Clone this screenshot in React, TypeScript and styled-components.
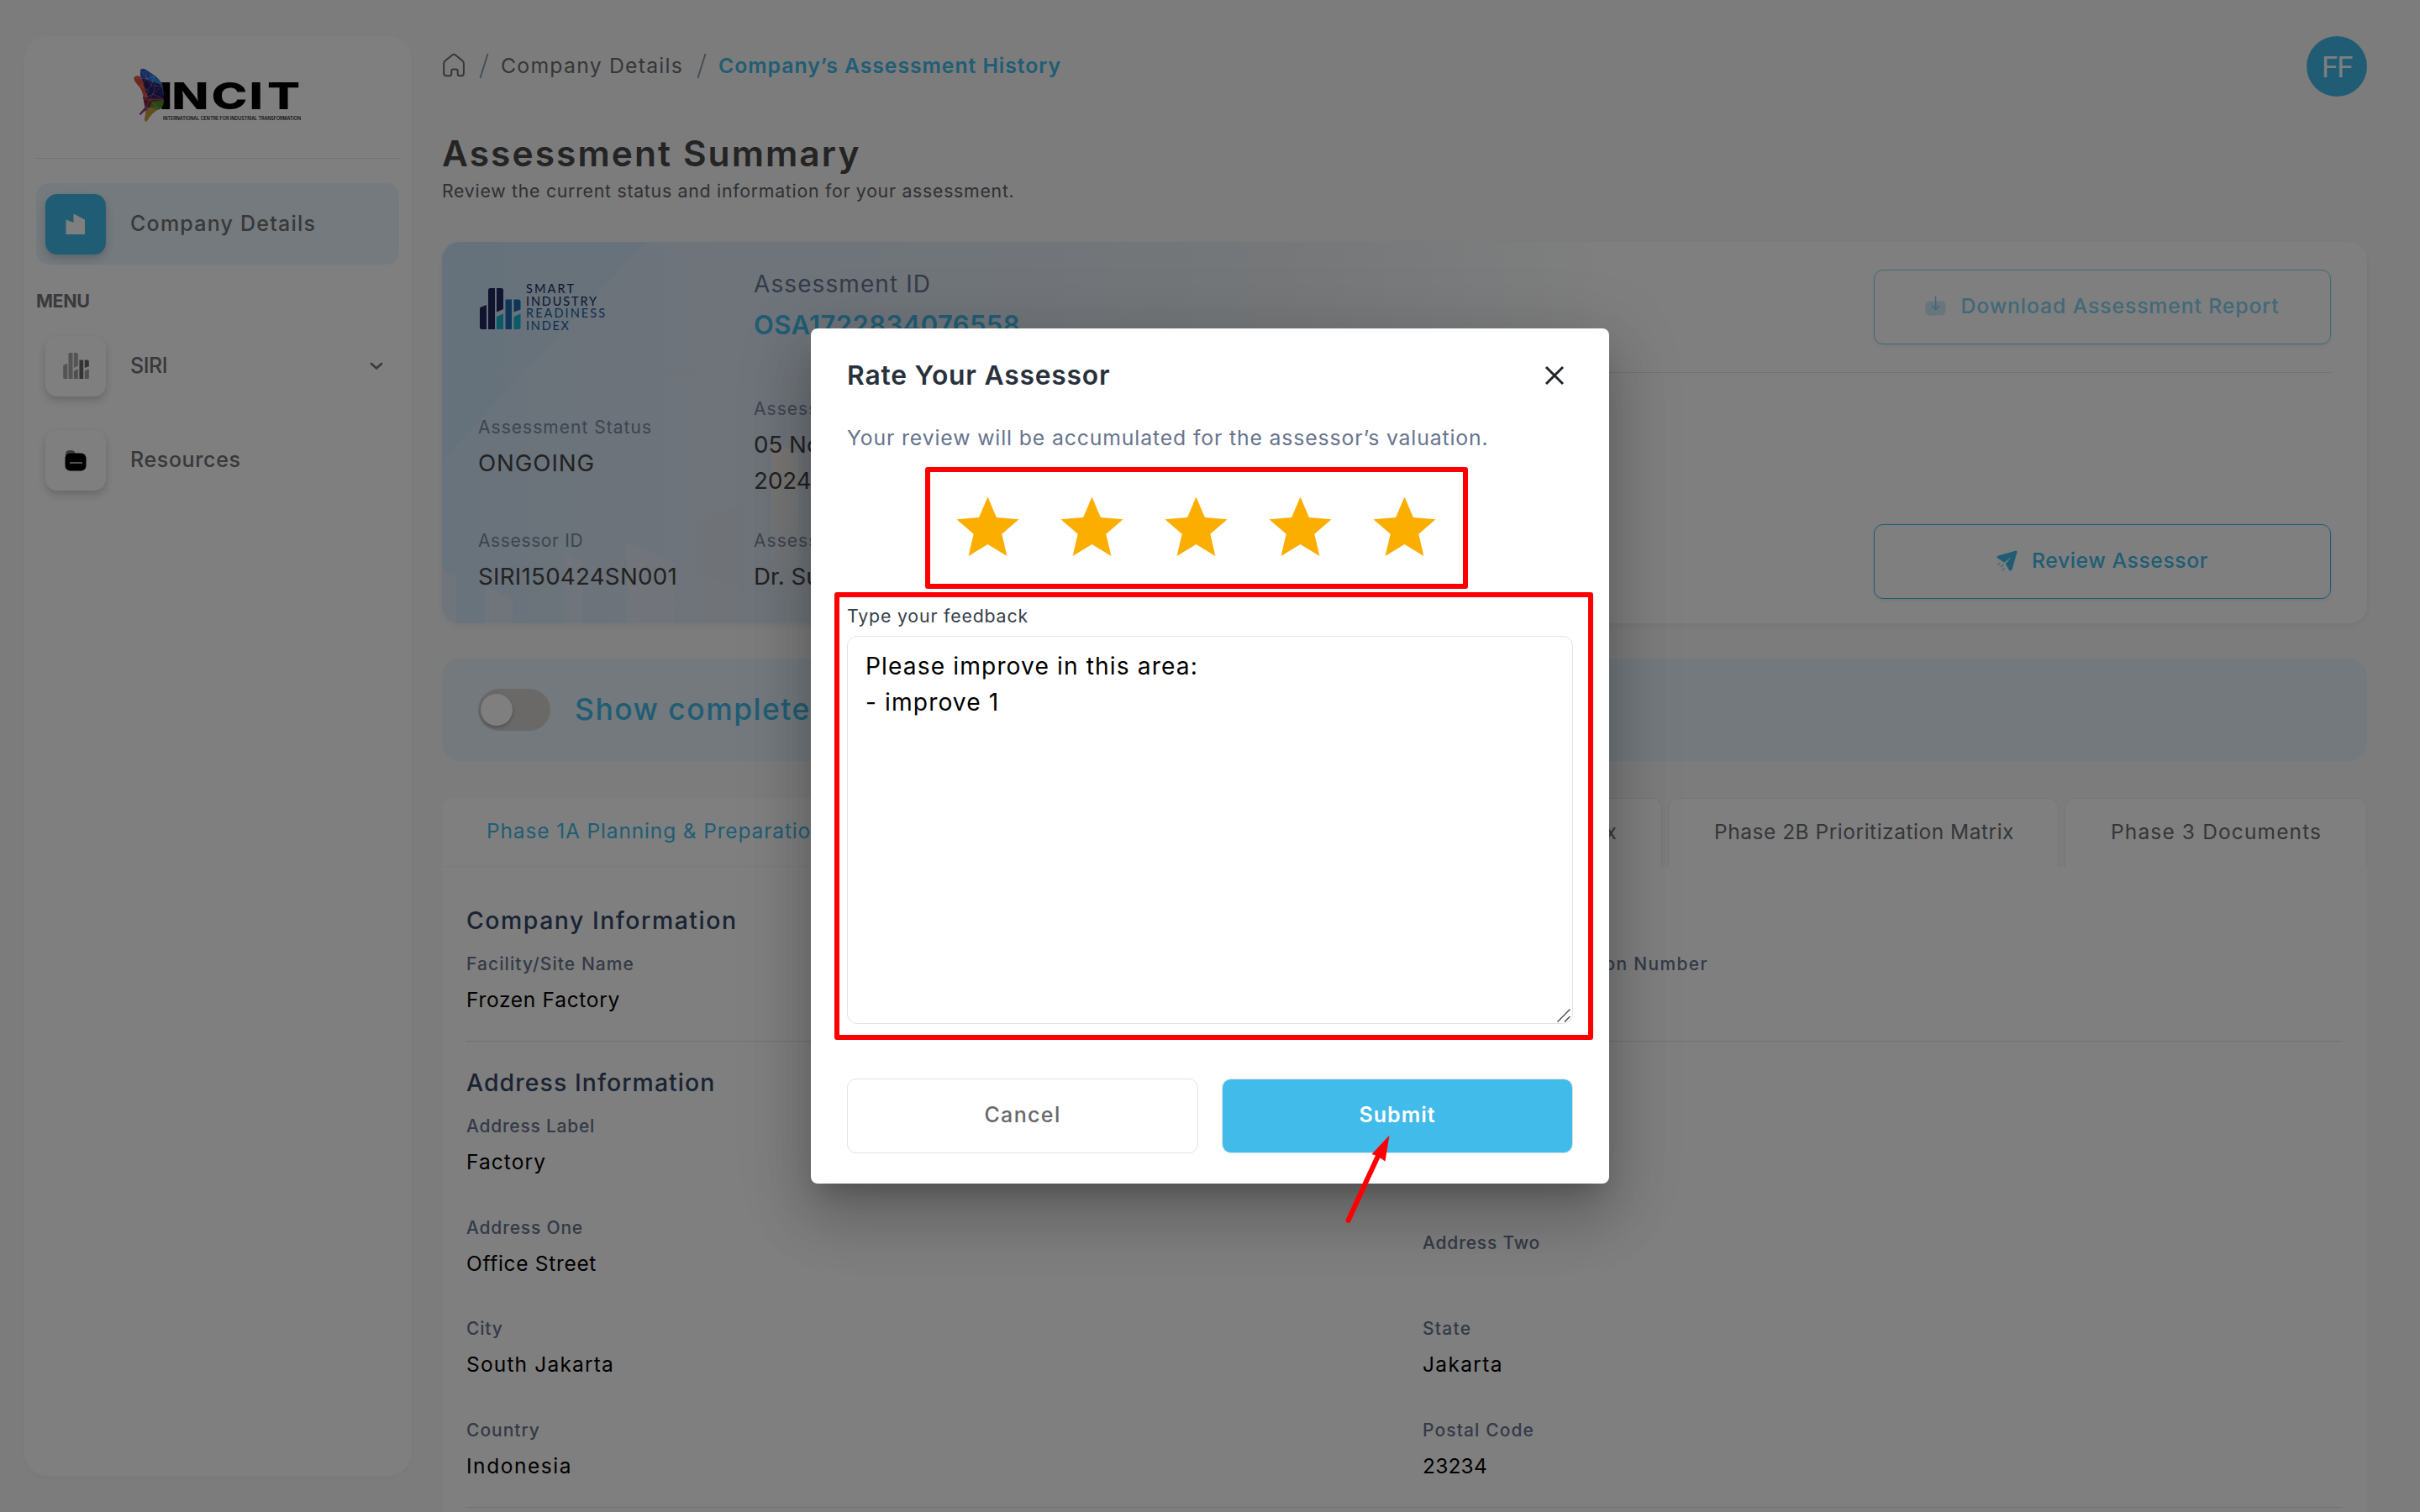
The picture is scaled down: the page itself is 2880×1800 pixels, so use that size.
import React, {ReactElement, ReactNode} from 'react';
import styled, {createGlobalStyle, css} from 'styled-components';

const BLUE = '#41bbe9';
const SLATE = '#67748e';

const GlobalStyle = createGlobalStyle`
	*, *::before, *::after {
		box-sizing: border-box;
	}

	body {
		margin: 0;
		background: #f8f9fa;
		font-family: Inter, 'Open Sans', sans-serif;
		overflow: hidden;
	}
`;

const tracked = css<{$track?: number}>`
	letter-spacing: ${p => p.$track ?? 0.045}em;
	white-space: nowrap;
`;

const Page = styled.div`
	position: relative;
	display: grid;
	grid-template-columns: 461px 2291px;
	column-gap: 36px;
	width: 2880px;
	height: 1800px;
	padding: 43px 0 0 29px;
	overflow: hidden;
`;

/* ---------- sidebar ---------- */

const Sidebar = styled.aside`
	display: flex;
	flex-direction: column;
	height: 1714px;
	padding: 27px 15px 0 14px;
	border-radius: 28px;
	background: #fff;
	box-shadow: 0 3px 8px rgba(0, 0, 0, 0.03);
`;

const LogoWrap = styled.div`
	display: flex;
	justify-content: center;
	height: 119px;
	border-bottom: 1px solid #e4e4e6;
`;

const MenuTitle = styled.div`
	${tracked};
	margin: 28px 0 -1px 0;
	font-size: 21.5px;
	font-weight: 700;
	line-height: 30px;
	color: #747578;
`;

const NavItem = styled.div<{$active?: boolean}>`
	display: flex;
	align-items: center;
	height: 97px;
	margin-top: ${p => (p.$active ? 29 : 15)}px;
	padding: 0 19px 0 11px;
	border-radius: 15px;
	background: ${p => (p.$active ? '#e8f5fb' : 'transparent')};
`;

const NavIcon = styled.div<{$active?: boolean}>`
	display: flex;
	align-items: center;
	justify-content: center;
	width: 72px;
	height: 72px;
	border-radius: 14px;
	background: ${p => (p.$active ? BLUE : '#fff')};
	box-shadow: 0 5px 11px rgba(20, 20, 20, 0.18), 0 2px 4px rgba(20, 20, 20, 0.03);
`;

const NavLabel = styled.span`
	${tracked};
	flex: 1;
	margin: -2px 0 0 29px;
	font-size: 25px;
	font-weight: 500;
	color: #707173;
`;

/* ---------- header ---------- */

const Main = styled.main`
	display: flex;
	flex-direction: column;
`;

const TopBar = styled.header`
	display: flex;
	align-items: center;
	justify-content: space-between;
	height: 72px;
`;

const Breadcrumb = styled.nav`
	display: flex;
	align-items: center;
	padding-bottom: 2px;
	font-size: 24.8px;
	color: #6c6d70;
`;

const Crumb = styled.span<{$current?: boolean; $track?: number}>`
	${tracked};
	font-weight: ${p => (p.$current ? 600 : 400)};
	color: ${p => (p.$current ? BLUE : 'inherit')};
`;

const Slash = styled.svg`
	width: 12px;
	height: 31px;
	margin: 0 14px 0 16px;
`;

const Avatar = styled.div`
	display: flex;
	align-items: center;
	justify-content: center;
	width: 72px;
	height: 72px;
	border-radius: 50%;
	background: ${BLUE};
	color: #fff;
	font-size: 34.5px;
	letter-spacing: -0.06em;
`;

const Title = styled.h1`
	${tracked};
	margin: 38px 0 0;
	font-size: 42.5px;
	font-weight: 600;
	line-height: 60px;
	color: #484848;
`;

const Subtitle = styled.p`
	${tracked};
	margin: 0;
	font-size: 21.3px;
	line-height: 29px;
	color: #606165;
`;

/* ---------- summary card ---------- */

const Card = styled.section`
	position: relative;
	height: 454px;
	margin-top: 46px;
	padding: 0 43px;
	border-radius: 21px;
	background: #fff;
	box-shadow: 0 3px 8px rgba(0, 0, 0, 0.06);
	overflow: hidden;
`;

const Backdrop = styled.svg`
	position: absolute;
	left: 0;
	top: 0;
	width: 1400px;
	height: 454px;
`;

const CardHead = styled.div`
	position: relative;
	display: flex;
	height: 156px;
	padding-top: 33px;
	border-bottom: 1px solid #e2e2e4;
`;

const IndexLogo = styled.svg`
	width: 160px;
	height: 72px;
	margin: 10px 168px 0 0;
	overflow: visible;
`;

const IdBlock = styled.div`
	flex: 1;
	margin-top: -5px;
`;

const IdLabel = styled.div`
	${tracked};
	font-size: 28px;
	line-height: 44px;
	color: #68768f;
`;

const IdValue = styled.div`
	${tracked};
	font-size: 31px;
	font-weight: 600;
	line-height: 54px;
	color: ${BLUE};
`;

const CardBody = styled.div`
	position: relative;
	display: flex;
	align-items: flex-end;
	justify-content: space-between;
	height: 298px;
	padding-bottom: 29px;
`;

const Facts = styled.div`
	display: grid;
	grid-template-columns: 328px 220px;
	row-gap: 33px;
	align-items: center;
	align-self: flex-start;
	padding-top: 26px;
`;

const FactLabel = styled.div<{$track?: number}>`
	${tracked};
	font-size: 21px;
	line-height: 34px;
	color: #7b88a0;
`;

const FactValue = styled.div<{$track?: number}>`
	${tracked};
	margin-top: 4px;
	font-size: 27.7px;
	line-height: 43px;
	color: #444;
	white-space: normal;
`;

const OutlineButton = styled.button<{$faded?: boolean}>`
	display: flex;
	align-items: center;
	justify-content: center;
	width: 544px;
	height: 89px;
	padding: 0 0 3px;
	border: 1px solid ${BLUE};
	border-radius: 11px;
	background: #fff;
	box-shadow: 0 2px 5px rgba(0, 0, 0, 0.08);
	color: ${BLUE};
	font: 500 24.8px Inter, sans-serif;
	opacity: ${p => (p.$faded ? 0.65 : 1)};

	svg {
		margin-right: 17px;
	}
`;

const ButtonText = styled.span<{$track?: number}>`
	${tracked};
`;

/* ---------- toggle band and tabs ---------- */

const Band = styled.section`
	display: flex;
	align-items: center;
	height: 122px;
	margin-top: 42px;
	padding: 0 43px;
	border-radius: 21px;
	background: #e6f2fb;
`;

const Switch = styled.div`
	display: flex;
	align-items: center;
	width: 86px;
	height: 50px;
	padding: 0 3px;
	border-radius: 25px;
	background: #d6d3d0;
`;

const Knob = styled.div`
	width: 38px;
	height: 38px;
	border-radius: 50%;
	background: #fff;
	box-shadow: 0 2px 4px rgba(0, 0, 0, 0.25);
`;

const BandText = styled.span`
	${tracked};
	margin: 0 0 2px 29px;
	font-size: 35.5px;
	font-weight: 500;
	color: ${BLUE};
`;

const Tabs = styled.div`
	display: flex;
	gap: 7px;
	height: 82px;
	margin-top: 44px;
`;

const Tab = styled.div<{$width: number; $active?: boolean; $track?: number}>`
	${tracked};
	width: ${p => p.$width}px;
	padding-left: ${p => (p.$active ? 53 : 54)}px;
	border: ${p => (p.$active ? '0' : '1px solid #ececee')};
	border-bottom: ${p => (p.$active ? '1px solid #f7f7f8' : '0')};
	border-radius: 12px 12px 0 0;
	background: #fff;
	font-size: 24.5px;
	line-height: 79px;
	color: ${p => (p.$active ? BLUE : '#6c6d70')};
`;

const Panel = styled.section`
	flex: 1;
	padding: 42px 29px 0;
	background: #fff;
`;

const SectionTitle = styled.h2<{$track?: number}>`
	${tracked};
	margin: 0 0 13px;
	font-size: 28.4px;
	font-weight: 500;
	line-height: 44px;
	color: #344767;
`;

const Divider = styled.div`
	height: 1px;
	margin: 30px 0 27px -1px;
	background: #e2e2e4;
`;

const Fields = styled.div`
	display: grid;
	grid-template-columns: 1138px 1fr;
	row-gap: 42.6px;
`;

const FieldBox = styled.div<{$bare: boolean}>`
	display: flex;
	flex-direction: column;
	justify-content: center;
	height: ${p => (p.$bare ? 71 : 78)}px;
`;

const FieldLabel = styled.div<{$track?: number}>`
	${tracked};
	font-size: 21px;
	font-weight: 500;
	line-height: 34px;
	color: ${SLATE};
`;

const FieldValue = styled.div<{$track?: number}>`
	${tracked};
	height: 38px;
	margin-top: 6px;
	font-size: 24.5px;
	line-height: 38px;
	color: #000;
`;

/* ---------- review dialog ---------- */

const Overlay = styled.div`
	position: absolute;
	inset: 0;
	display: flex;
	align-items: center;
	justify-content: center;
	background: rgba(0, 0, 0, 0.5);
`;

const Dialog = styled.div`
	position: relative;
	width: 950px;
	height: 1018px;
	padding: 32px 43px 0;
	border-radius: 8px;
	background: #fff;
	box-shadow:
		0 20px 27px -13px rgba(0, 0, 0, 0.2),
		0 43px 68px 5px rgba(0, 0, 0, 0.14),
		0 16px 83px 14px rgba(0, 0, 0, 0.12);
`;

const DialogHead = styled.div`
	display: flex;
	align-items: center;
	justify-content: space-between;
	height: 48px;
	padding-right: 10px;
`;

const DialogTitle = styled.h2`
	${tracked};
	margin: -1px 0 0;
	font-size: 31.8px;
	font-weight: 600;
	color: #29313c;
`;

const Hint = styled.p`
	${tracked};
	margin: 32px 0 0;
	font-size: 24.8px;
	line-height: 36px;
	color: ${SLATE};
`;

const Stars = styled.div`
	display: flex;
	justify-content: center;
	margin: 45px -1px 0 0;

	svg {
		width: 89px;
		height: 89px;
		margin-right: 35px;
		fill: #fbae00;
	}
`;

const FeedbackLabel = styled.label`
	${tracked};
	display: block;
	margin-top: 44px;
	font-size: 21.3px;
	line-height: 32px;
	color: #36404a;
`;

const FeedbackWrap = styled.div`
	position: relative;
	height: 462px;
	margin-top: 8px;
`;

const Feedback = styled.textarea`
	${tracked};
	display: block;
	width: 100%;
	height: 100%;
	padding: 14px 21px;
	border: 1px solid #e2e3e5;
	border-radius: 12px;
	outline: none;
	resize: none;
	font: 400 28.2px/43px Inter, sans-serif;
	color: #000;
	white-space: pre-wrap;
`;

const ResizeGrip = styled.svg`
	position: absolute;
	right: 3px;
	bottom: 2px;
	width: 16px;
	height: 16px;
`;

const Actions = styled.div`
	display: grid;
	grid-template-columns: 418px 418px;
	column-gap: 28px;
	margin-top: 65px;
`;

const ActionButton = styled.button<{$primary?: boolean}>`
	height: 89px;
	padding: 0 0 3px;
	border: 1px solid #e2e4e9;
	border-radius: 11px;
	background: ${p => (p.$primary ? BLUE : '#fff')};
	color: ${p => (p.$primary ? '#fff' : '#67686a')};
	font: ${p => (p.$primary ? 600 : 500)} 25px Inter, sans-serif;
`;

const Highlight = styled.div<{$x: number; $y: number; $w: number; $h: number}>`
	position: absolute;
	left: ${p => p.$x}px;
	top: ${p => p.$y}px;
	width: ${p => p.$w}px;
	height: ${p => p.$h}px;
	border: 6px solid #f00;
	border-radius: 3px;
	pointer-events: none;
`;

const Pointer = styled.svg`
	position: absolute;
	left: 630px;
	top: 955px;
	width: 70px;
	height: 115px;
	pointer-events: none;
`;

/* ---------- drawings ---------- */

const IncitMark = styled.svg`
	width: 220px;
	height: 80px;
	overflow: visible;
`;

function IncitLogo(): ReactElement {
	return (
		<IncitMark viewBox="0 0 220 80">
			<g transform="scale(1.33 1)" fontFamily="Inter, sans-serif" fontWeight="800" fontSize="43.5" fill="#000">
				<text y="60.3" x="30 41.5 77 111 127">INCIT</text>
			</g>
			<path d="M18 13q3-2 6-.5l12 8q6 5 9 13l1 10-14-3Q21 31 18 20z" fill="#3057c4"/>
			<path d="M28 16l8 5q6 5 9 12l-14-5z" fill="#2a86d8"/>
			<path d="M10.5 22q5-4 9.5 1 4 13 10 24l-8 1q-1-11-8-18-4-4-3.5-8z" fill="#d8503f"/>
			<path d="M20 23l23 8 3 18-17 1Q23 37 20 23z" fill="#2e1f66"/>
			<path d="M21 45l25 3-4 10-18 2z" fill="#7d2339"/>
			<path d="M32 51l14-2q0 12-10 12l-8-1z" fill="#578d27"/>
			<path d="M25 58l15 2q-9 5-14 14-2 2-3-1z" fill="#c59a37"/>
			<path d="M25 56l-7 8q-2 2 0 3 2-1 3-3l6-4z" fill="#8b3f98"/>
			<path
				d="M19 14l7 10 9-4-4 12h13L33 42l12 6-16 1 10 9-12 1M13 23l13 1-8 8 10 6-5 9 10-5 3-11-10-8M24 13l2 11 5 8M22 48l7 1 4-7M31 32l-6 6M29 49l-4 9"
				stroke="#fff"
				strokeWidth=".4"
				opacity=".6"
				fill="none"
			/>
			<text x="45" y="73" textLength="164" lengthAdjust="spacingAndGlyphs" fontFamily="Inter, sans-serif" fontWeight="500" fontSize="6">INTERNATIONAL CENTRE FOR INDUSTRIAL TRANSFORMATION</text>
		</IncitMark>
	);
}

function IndexBars({tones}: {tones: [string, string, string, string]}): ReactElement {
	const [a, b, c, d] = tones;
	return (
		<>
			<path d="M0 24.5q0-1.500 1.500-2l6.500-2.500v29H2.500Q0 49 0 46.500z" fill={a}/>
			<path d="M10 2.500Q10 0 12.500 0H18v49h-8z" fill={b}/>
			<path d="M20 0h5.500Q28 0 28 2.500V25l-8 3.500z" fill={b}/>
			<path d="M20 34l8-3.500V49h-8zM40.500 34l8-3.500v16q0 2.500-2.500 2.500h-5.500z" fill={d}/>
			<path d="M30.500 13.500H38V49h-7.500zM40.500 13.500H46q2.500 0 2.500 2.500v9.500l-8 3z" fill={c}/>
		</>
	);
}

function SmartIndexLogo(): ReactElement {
	return (
		<IndexLogo viewBox="0 0 160 72">
			<g transform="translate(2 12)">
				<IndexBars tones={['#25285f', '#25285f', '#1f6bb0', '#16b5cf']}/>
			</g>
			<g fontFamily="Lato, sans-serif" fontSize="14.5">
				<text x="57" y="18" textLength="57" fill="#25285f">SMART</text>
				<text x="57" y="32.500" textLength="84" fill="#25285f">INDUSTRY</text>
				<text x="57" y="47" textLength="94" fill="#1f5b98">READINESS</text>
				<text x="57" y="61.500" textLength="51" fill="#1f5b98">INDEX</text>
			</g>
		</IndexLogo>
	);
}

function CardBackdrop(): ReactElement {
	return (
		<Backdrop viewBox="0 0 1400 454" preserveAspectRatio="none">
			<defs>
				<linearGradient id="wash">
					<stop offset="0" stopColor="#d2e6f7"/>
					<stop offset=".25" stopColor="#dee8f5"/>
					<stop offset=".5" stopColor="#e2ebf4"/>
					<stop offset=".72" stopColor="#ebeff2"/>
					<stop offset="1" stopColor="#fff"/>
				</linearGradient>
				<linearGradient id="tower" x2="0" y2="1">
					<stop offset="0" stopColor="#f8efe6" stopOpacity=".9"/>
					<stop offset="1" stopColor="#f8efe6" stopOpacity="0"/>
				</linearGradient>
			</defs>
			<rect width="1400" height="454" fill="url(#wash)"/>
			<path d="M0 0h243L0 260z" fill="#cbe2f5" opacity=".7"/>
			<g fill="#eaeff6" opacity=".55">
				<path d="M0 391l17 9v54H0zM51 409l33 17v28H51zM145 368l22 12v74h-22zM220 358l56 24v72h-56z"/>
				<path d="M303 392l57 24v38h-57z"/>
			</g>
			<path d="M303 335l57-24v143h-57z" fill="#dfe5ea" opacity=".6"/>
			<path d="M392 237l32 14v180h-32z" fill="url(#tower)"/>
		</Backdrop>
	);
}

const FactoryIcon = () => (
	<svg width="24" height="26" viewBox="0 0 24 26"><path d="M.5 7.500l9 3.500V.5L23 7.500V25H.5z" fill="#fff"/></svg>
);

const BarsIcon = () => (
	<svg width="31" height="31" viewBox="0 0 48.5 49"><IndexBars tones={['#a9a9ab', '#a9a9ab', '#69696b', '#a0a0a2']}/></svg>
);

const FolderIcon = () => (
	<svg width="26" height="26" viewBox="0 0 26 26">
		<path d="M1 9V5.500Q1 1 6 1h2.500q2 0 3 1.500L13 5z" fill="#77787a"/>
		<rect x=".5" y="4.500" width="25" height="21" rx="6" fill="#000"/>
		<path d="M6.500 16h14" stroke="#d8d8d8" strokeWidth="1.5" strokeLinecap="round"/>
	</svg>
);

const ChevronIcon = () => (
	<svg width="16" height="10" viewBox="0 0 16 10"><path d="M2 2l6 5.500L14 2" fill="none" stroke="#747578" strokeWidth="2.6" strokeLinecap="round" strokeLinejoin="round"/></svg>
);

const HomeIcon = () => (
	<svg width="28" height="30" viewBox="0 0 28 30"><path d="M2.200 12.500q0-1.800 1.400-3L12.300 2.500q1.900-1.300 3.800 0l8.400 7q1.400 1.200 1.400 3v11.700q0 3-3 3h-1.700q-2.500 0-2.500-2.500v-3.200q0-2-2-2h-3.400q-2 0-2 2v3.200q0 2.500-2.500 2.500H5.200q-3 0-3-3z" fill="none" stroke="#6c6d70" strokeWidth="2"/></svg>
);

const DownloadIcon = () => (
	<svg width="25" height="24" viewBox="0 0 25 24">
		<rect x=".5" y="6.500" width="24" height="17" rx="5" fill={BLUE} opacity=".4"/>
		<path d="M12.500 1v15M8.500 12.500l4 4 4-4" fill="none" stroke={BLUE} strokeWidth="1.6" strokeLinecap="round" strokeLinejoin="round"/>
	</svg>
);

const SendIcon = () => (
	<svg width="25" height="25" viewBox="0 0 25 25">
		<path d="M2 6.500L22.500.7q2.400-.5 1.900 1.900L18.600 23q-1.600 2.600-3.800.6l-4-7.300 6.800-8.100-8.300 6.500L1.300 9.500Q-.6 7.500 2 6.500z" fill={BLUE}/>
		<path d="M3.800 15.300l-2 2M8 17.300l-2.300 2.200M9.200 21.700l-2 2" stroke={BLUE} strokeWidth="1.8" strokeLinecap="round" opacity=".5"/>
	</svg>
);

const SlashMark = () => (
	<Slash viewBox="0 0 12 31"><path d="M10.500 1L1.500 30" stroke="#8f9da8" strokeWidth="2"/></Slash>
);

/* ---------- page ---------- */

interface FieldProps {
	label: string;
	track?: number;
	value?: string;
	valueTrack?: number;
}

function Field({label, track, value, valueTrack}: FieldProps): ReactElement {
	return (
		<FieldBox $bare={value === undefined}>
			<FieldLabel $track={track}>{label}</FieldLabel>
			{value !== undefined && <FieldValue $track={valueTrack}>{value}</FieldValue>}
		</FieldBox>
	);
}

function Fact({label, track, valueTrack, children}: {label: string; track?: number; valueTrack?: number; children: ReactNode}): ReactElement {
	return (
		<div>
			<FactLabel $track={track}>{label}</FactLabel>
			<FactValue $track={valueTrack}>{children}</FactValue>
		</div>
	);
}

function ReviewDialog(): ReactElement {
	return (
		<Overlay>
			<Dialog>
				<DialogHead>
					<DialogTitle $track={0.025}>Rate Your Assessor</DialogTitle>
					<svg width="24" height="24" viewBox="0 0 24 24"><path d="M2 2l20 20M22 2L2 22" stroke="#22262c" strokeWidth="3"/></svg>
				</DialogHead>
				<Hint $track={0.0345}>Your review will be accumulated for the assessor’s valuation.</Hint>
				<Stars>
					{[1, 2, 3, 4, 5].map(n => (
						<svg key={n} viewBox="0 0 24 24"><path d="M12 17.270L18.180 21l-1.640-7.030L22 9.240l-7.190-.61L12 2 9.190 8.630 2 9.240l5.460 4.730L5.820 21z"/></svg>
					))}
				</Stars>
				<FeedbackLabel $track={0.039}>Type your feedback</FeedbackLabel>
				<FeedbackWrap>
					<Feedback $track={0.039} defaultValue={'Please improve in this area:\n- improve 1'}/>
					<ResizeGrip viewBox="0 0 16 16"><path d="M.5 15.500L15.500.5M9 15.500L15.500 9" stroke="#444" strokeWidth="1.3"/></ResizeGrip>
				</FeedbackWrap>
				<Actions>
					<ActionButton><ButtonText $track={0.055}>Cancel</ButtonText></ActionButton>
					<ActionButton $primary><ButtonText $track={0.04}>Submit</ButtonText></ActionButton>
				</Actions>
				<Highlight $x={136} $y={165} $w={646} $h={145}/>
				<Highlight $x={28} $y={314} $w={903} $h={533}/>
				<Pointer viewBox="0 0 70 115">
					<path d="M9.500 107L45 30" stroke="#f00" strokeWidth="6" strokeLinecap="round"/>
					<path d="M58.500 5.500L37.500 28l4.500 1.500 7 4 4.500 3z" fill="#f00"/>
				</Pointer>
			</Dialog>
		</Overlay>
	);
}

export default function App(): ReactElement {
	return (
		<Page>
			<GlobalStyle/>
			<Sidebar>
				<LogoWrap><IncitLogo/></LogoWrap>
				<NavItem $active>
					<NavIcon $active><FactoryIcon/></NavIcon>
					<NavLabel $track={0.049}>Company Details</NavLabel>
				</NavItem>
				<MenuTitle $track={-0.02}>MENU</MenuTitle>
				<NavItem>
					<NavIcon><BarsIcon/></NavIcon>
					<NavLabel $track={-0.02}>SIRI</NavLabel>
					<ChevronIcon/>
				</NavItem>
				<NavItem>
					<NavIcon><FolderIcon/></NavIcon>
					<NavLabel $track={0.025}>Resources</NavLabel>
				</NavItem>
			</Sidebar>
			<Main>
				<TopBar>
					<Breadcrumb>
						<HomeIcon/>
						<SlashMark/>
						<Crumb $track={0.049}>Company Details</Crumb>
						<SlashMark/>
						<Crumb $current $track={0.038}>Company’s Assessment History</Crumb>
					</Breadcrumb>
					<Avatar>FF</Avatar>
				</TopBar>
				<Title $track={0.0485}>Assessment Summary</Title>
				<Subtitle $track={0.034}>Review the current status and information for your assessment.</Subtitle>
				<Card>
					<CardBackdrop/>
					<CardHead>
						<SmartIndexLogo/>
						<IdBlock>
							<IdLabel $track={0.039}>Assessment ID</IdLabel>
							<IdValue $track={0.013}>OSA1722834076558</IdValue>
						</IdBlock>
						<OutlineButton $faded>
							<DownloadIcon/>
							<ButtonText $track={0.035}>Download Assessment Report</ButtonText>
						</OutlineButton>
					</CardHead>
					<CardBody>
						<Facts>
							<Fact label="Assessment Status" track={0.049} valueTrack={0.032}>ONGOING</Fact>
							<Fact label="Assessment Date" track={0.049} valueTrack={0}>05 November 2024</Fact>
							<Fact label="Assessor ID" track={0.03} valueTrack={0.0095}>SIRI150424SN001</Fact>
							<Fact label="Assessor Name" track={0.049} valueTrack={0}>Dr. Suryadi</Fact>
						</Facts>
						<OutlineButton>
							<SendIcon/>
							<ButtonText $track={0.022}>Review Assessor</ButtonText>
						</OutlineButton>
					</CardBody>
				</Card>
				<Band>
					<Switch><Knob/></Switch>
					<BandText $track={0.041}>Show completed assessment</BandText>
				</Band>
				<Tabs>
					<Tab $width={507} $active $track={0.035}>Phase 1A Planning &amp; Preparation</Tab>
					<Tab $width={466}>Phase 1B Assessment</Tab>
					<Tab $width={465} $track={0.03}>Phase 2A Assessment Matrix</Tab>
					<Tab $width={465} $track={0.0213}>Phase 2B Prioritization Matrix</Tab>
					<Tab $width={360} $track={0.0465}>Phase 3 Documents</Tab>
				</Tabs>
				<Panel>
					<SectionTitle $track={0.054}>Company Information</SectionTitle>
					<Fields>
						<Field label="Facility/Site Name" track={0.0513} value="Frozen Factory" valueTrack={0.0286}/>
						<Field label="Business Registration Number" track={0.0637} value=""/>
					</Fields>
					<Divider/>
					<SectionTitle $track={0.038}>Address Information</SectionTitle>
					<Fields>
						<Field label="Address Label" track={0.0353} value="Factory" valueTrack={0.044}/>
						<div/>
						<Field label="Address One" track={0.0388} value="Office Street" valueTrack={0.028}/>
						<Field label="Address Two" track={0.0388}/>
						<Field label="City" track={0.04} value="South Jakarta" valueTrack={0.048}/>
						<Field label="State" track={0.06} value="Jakarta" valueTrack={0.055}/>
						<Field label="Country" track={0.047} value="Indonesia" valueTrack={0.063}/>
						<Field label="Postal Code" track={0.053} value="23234" valueTrack={0.008}/>
					</Fields>
					<Divider/>
				</Panel>
			</Main>
			<ReviewDialog/>
		</Page>
	);
}
